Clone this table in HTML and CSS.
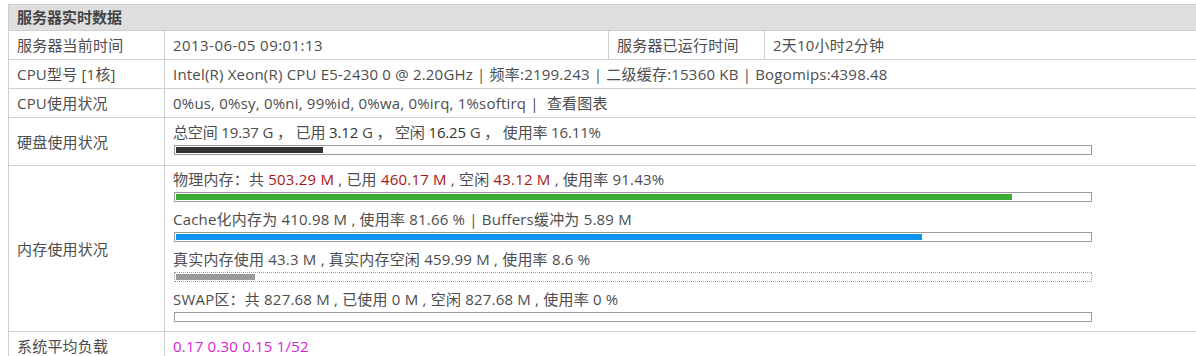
FILE: index.html
```html
<!DOCTYPE html>
<html lang="zh-CN">
<head>
<meta charset="utf-8">
<title>服务器实时数据</title>
<link rel="stylesheet" href="styles.css">
</head>
<body>
<div class="wrap">
<table class="info">
  <colgroup>
    <col class="c-label"><col class="c-value"><col class="c-label"><col class="c-value">
  </colgroup>
  <tr class="head"><th colspan="4">服务器实时数据</th></tr>
  <tr>
    <td>服务器当前时间</td>
    <td class="num">2013-06-05 09:01:13</td>
    <td>服务器已运行时间</td>
    <td>2天10小时2分钟</td>
  </tr>
  <tr>
    <td>CPU型号 [1核]</td>
    <td colspan="3">Intel(R) Xeon(R) CPU E5-2430 0 @ 2.20GHz | 频率:2199.243 | 二级缓存:15360 KB | Bogomips:4398.48</td>
  </tr>
  <tr>
    <td>CPU使用状况</td>
    <td colspan="3">0%us, 0%sy, 0%ni, 99%id, 0%wa, 0%irq, 1%softirq | &nbsp;查看图表</td>
  </tr>
  <tr class="disk">
    <td>硬盘使用状况</td>
    <td colspan="3">
      <div class="meter">
        <div class="meter-text disk-text">总空间 19.37 G ，&nbsp;已用 <span class="dark">3.12</span> G ，&nbsp;空闲 <span class="dark">16.25</span> G ，&nbsp;使用率 16.11%</div>
        <div class="bar"><div class="fill fill-dark" style="width:16.11%"></div></div>
      </div>
    </td>
  </tr>
  <tr class="mem">
    <td>内存使用状况</td>
    <td colspan="3">
      <div class="meter">
        <div class="meter-text">物理内存：共 <span class="red">503.29 M</span> , 已用 <span class="red">460.17 M</span> , 空闲 <span class="red">43.12 M</span> , 使用率 91.43%</div>
        <div class="bar"><div class="fill fill-green" style="width:91.43%"></div></div>
      </div>
      <div class="meter">
        <div class="meter-text">Cache化内存为 410.98 M , 使用率 81.66 % | Buffers缓冲为 5.89 M</div>
        <div class="bar"><div class="fill fill-blue" style="width:81.66%"></div></div>
      </div>
      <div class="meter">
        <div class="meter-text">真实内存使用 43.3 M , 真实内存空闲 459.99 M , 使用率 8.6 %</div>
        <div class="bar bar-dotted"><div class="fill fill-gray" style="width:8.6%"></div></div>
      </div>
      <div class="meter">
        <div class="meter-text">SWAP区：共 827.68 M , 已使用 0 M , 空闲 827.68 M , 使用率 0 %</div>
        <div class="bar"><div class="fill fill-gray" style="width:0%"></div></div>
      </div>
    </td>
  </tr>
  <tr>
    <td>系统平均负载</td>
    <td colspan="3" class="load">0.17 0.30 0.15 1/52</td>
  </tr>
</table>
</div>
</body>
</html>
```

FILE: styles.css
```css
html, body {
  margin: 0;
  padding: 0;
  overflow: hidden;
  background: #fff;
}

.wrap {
  padding: 4px 0 0 8px;
}

.info {
  width: 1200px;
  table-layout: fixed;
  border-collapse: collapse;
  font-family: "Open Sans", "Noto Sans CJK SC", sans-serif;
  font-size: 15px;
  letter-spacing: 0.2px;
  color: #4d4d4d;
}

.c-label { width: 156px; }
.c-value { width: 444px; }

.info th,
.info td {
  border: 1px solid #cfcfcf;
  line-height: 20px;
  padding: 4px 8px;
  text-align: left;
  vertical-align: middle;
  white-space: nowrap;
}

.info .num { letter-spacing: 0.45px; }

.head th {
  background: #dedede;
  font-weight: bold;
  color: #444;
  padding: 2px 8px 3px;
  letter-spacing: 0;
}

.disk td { padding-top: 4px; padding-bottom: 3px; }
.mem td { padding-top: 3px; padding-bottom: 2px; }
.disk td:first-child,
.mem td:first-child { padding-top: 0; padding-bottom: 0; }

.meter-text { line-height: 20px; }
.disk-text { letter-spacing: -0.15px; }

.bar {
  width: 918px;
  height: 10px;
  box-sizing: border-box;
  border: 1px solid #9a9a9a;
  padding: 1px;
  margin: 3px 0 7px 1px;
  background: #fff;
}

.bar-dotted { border-style: dotted; }

.fill { height: 6px; }
.fill-dark { background: #333; }
.fill-green { background: #3cae36; }
.fill-blue { background: #0b93ef; }
.fill-gray { background: #999; }

.dark { color: #333; }
.red { color: #a8161c; }
.load { color: #d61fd6; }
```
